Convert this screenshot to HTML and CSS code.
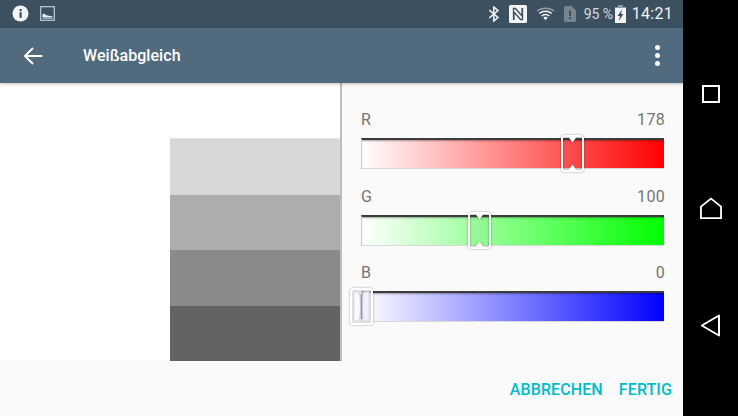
FILE: index.html
```html
<!DOCTYPE html>
<html lang="de">
<head>
<meta charset="utf-8">
<title>Weißabgleich</title>
<link rel="stylesheet" href="styles.css">
</head>
<body>
<div class="screen">
  <div class="main">
    <header class="status">
      <div class="status-left">
        <svg class="ic-info" width="17" height="17" viewBox="0 0 17 17"><circle cx="8.500" cy="8.500" r="8" fill="#f2f4f5"/><rect x="7.500" y="7.200" width="2.200" height="5.600" fill="#3d5060"/><rect x="7.500" y="4" width="2.200" height="2.200" fill="#3d5060"/></svg>
        <svg width="15" height="15" viewBox="0 0 15 15"><rect x="0.700" y="0.700" width="13.600" height="13.600" fill="none" stroke="#c4ccd2" stroke-width="1.200"/><path d="M2.500 11.500V8.500L4.500 7.500L6 9.200L8 9.500L9.500 10L12.500 10.300V11.500Z" fill="#eef1f3"/><rect x="2.500" y="12" width="10" height="1" fill="#9aa7b1"/></svg>
      </div>
      <div class="status-right">
        <svg width="12" height="16" viewBox="0 0 12 16"><path d="M1.300 4.200L10 11.400L5.800 15V1L10 4.600L1.300 11.800" fill="none" stroke="#f2f4f5" stroke-width="1.500"/></svg>
        <svg class="ic-nfc" width="18" height="18" viewBox="0 0 18 18"><rect width="18" height="18" rx="1.500" fill="#f2f4f5"/><path d="M4.500 15V3.500H6.500L13 11V3M13.500 3V14.500H11.500L5 7V15" fill="none" stroke="#3d5060" stroke-width="1.300"/></svg>
        <svg class="ic-wifi" width="19" height="15" viewBox="0 0 20 14"><path d="M1 4.300C5.800 .4 14.200 .4 19 4.300" fill="none" stroke="#8d9ba6" stroke-width="1.600"/><path d="M3.500 7C7.200 4 12.800 4 16.500 7" fill="none" stroke="#f2f4f5" stroke-width="1.600"/><path d="M6 9.500C8.300 7.800 11.700 7.800 14 9.500" fill="none" stroke="#f2f4f5" stroke-width="1.600"/><path d="M7.600 11.200C9 10.200 11 10.200 12.400 11.200L10 14Z" fill="#f2f4f5"/></svg>
        <svg class="ic-sim" width="12" height="16" viewBox="0 0 12 16"><path d="M0 1.500A1.500 1.500 0 0 1 1.500 0H7.500L12 4.500V14.500A1.500 1.500 0 0 1 10.500 16H1.500A1.500 1.500 0 0 1 0 14.500Z" fill="#76858f"/><rect x="5" y="4.500" width="2" height="5.500" fill="#3d5060"/><rect x="5" y="11" width="2" height="2" fill="#3d5060"/></svg>
        <span class="pct">95 %</span>
        <svg class="ic-batt" width="11" height="18" viewBox="0 0 11 18"><rect y="2.500" width="11" height="15.500" fill="#f2f4f5"/><rect x="3" y="0" width="5" height="3" fill="#8d9ba6"/><path d="M7 4.500L2.500 11H5L3.800 16L8.500 9H6Z" fill="#3d5060"/></svg>
        <span class="clock">14:21</span>
      </div>
    </header>
    <div class="appbar">
      <svg class="ic-back" width="20" height="18" viewBox="0 0 20 18"><path d="M19.300 9H2M10 1L2 9L10 17" fill="none" stroke="#fff" stroke-width="2"/></svg>
      <h1 class="title">Weißabgleich</h1>
      <div class="more"><i></i><i></i><i></i></div>
    </div>
    <div class="content">
      <div class="preview">
        <div class="swatches">
          <div class="sw sw1"></div>
          <div class="sw sw2"></div>
          <div class="sw sw3"></div>
          <div class="sw sw4"></div>
        </div>
      </div>
      <div class="panel">
        <div class="row">
          <div class="labels"><span>R</span><span>178</span></div>
          <div class="track track-r">
            <svg class="thumb" style="left:198px" width="25" height="39" viewBox="0 0 25 39"><rect x="2" y="2" width="21" height="35" rx="2.500" fill="rgba(200,0,0,.04)" stroke="#fff" stroke-width="2"/><path d="M8.500 3L12.500 8.500L16.500 3ZM8.500 36L12.500 30.500L16.500 36Z" fill="#fff"/></svg>
          </div>
        </div>
        <div class="row">
          <div class="labels"><span>G</span><span>100</span></div>
          <div class="track track-g">
            <svg class="thumb" style="left:105px" width="25" height="39" viewBox="0 0 25 39"><rect x="2" y="2" width="21" height="35" rx="2.500" fill="rgba(0,120,0,.04)" stroke="#fff" stroke-width="2"/><path d="M8.500 3L12.500 8.500L16.500 3ZM8.500 36L12.500 30.500L16.500 36Z" fill="#fff"/></svg>
          </div>
        </div>
        <div class="row">
          <div class="labels"><span>B</span><span>0</span></div>
          <div class="track track-b">
            <svg class="thumb" style="left:-13px" width="25" height="39" viewBox="0 0 25 39"><rect x="2" y="2" width="21" height="35" rx="2.500" fill="rgba(255,255,255,.55)" stroke="#fff" stroke-width="2"/><path d="M5 5H9.500C12 11 12 28 9.500 34H5Z" fill="#fafafa" stroke="#dcdcdc"/><path d="M20 5H15C13 11 13 28 15 34H20Z" fill="#f1f1fd" stroke="#dcdce8"/><path d="M12.500 7V32" stroke="#9090c8" stroke-width="1.500"/></svg>
          </div>
        </div>
      </div>
    </div>
    <footer class="actions">
      <span class="btn">ABBRECHEN</span>
      <span class="btn">FERTIG</span>
    </footer>
  </div>
  <nav class="navbar">
    <svg class="nav-square" width="18" height="18" viewBox="0 0 18 18"><rect x="1" y="1" width="16" height="16" fill="none" stroke="#fff" stroke-width="2"/></svg>
    <svg width="22" height="23" viewBox="0 0 23 23"><path d="M1 21.500V9.500L11.500 1.200L22 9.500V21.500Z" fill="none" stroke="#fff" stroke-width="1.900"/></svg>
    <svg width="21" height="23" viewBox="0 0 21 23"><path d="M19 1.500V21.500L1.800 11.500Z" fill="none" stroke="#fff" stroke-width="2" stroke-linejoin="round"/></svg>
  </nav>
</div>
</body>
</html>
```

FILE: styles.css
```css
* { box-sizing: border-box; }
html, body { margin: 0; padding: 0; }
body { width: 738px; height: 416px; overflow: hidden; background: #000; font-family: Roboto, "Liberation Sans", sans-serif; }
.screen { display: flex; width: 738px; height: 416px; }
.main { width: 683px; display: flex; flex-direction: column; background: #fafafa; }

.status { height: 28px; background: #3d5060; display: flex; justify-content: space-between; align-items: center; padding: 0 10px 1px 12px; }
.status-left { display: flex; align-items: center; gap: 11px; }
.status-right { display: flex; align-items: center; color: #f2f4f5; }
.ic-nfc { margin-left: 9px; }
.ic-wifi { margin-left: 9px; }
.ic-sim { margin-left: 9px; }
.pct { font-size: 14px; margin-left: 8px; color: #d5dbe0; white-space: nowrap; width: 31px; }
.ic-batt { margin-left: 0; }
.clock { font-size: 16px; margin-left: 6px; letter-spacing: 0.3px; }

.appbar { height: 55px; background: #526a7d; display: flex; align-items: center; padding: 0 23px 0 23px; box-shadow: 0 1px 3px rgba(0,0,0,.25); position: relative; }
.title { margin: -1px 0 0 40px; flex: 1; font-size: 16px; font-weight: 500; color: #fff; letter-spacing: 0.05px; }
.more { display: flex; flex-direction: column; gap: 3px; }
.more i { width: 5px; height: 5px; border-radius: 50%; background: #fff; display: block; }

.content { display: flex; height: 278px; }
.preview { width: 340px; background: #fff; padding: 55px 0 0 170px; }
.swatches { display: flex; flex-direction: column; height: 223px; }
.sw { flex: 1; }
.sw1 { background: #d7d7d7; border-top: 1px solid #e6e6e6; }
.sw2 { background: #adadad; }
.sw3 { background: #8a8a8a; }
.sw4 { background: #636363; }
.panel { flex: 1; border-left: 2px solid #bdbdbd; padding: 26px 18px 0 19px; }
.row { height: 76.500px; }
.labels { display: flex; justify-content: space-between; font-size: 16px; line-height: 19px; color: #757575; height: 29px; padding-top: 1px; letter-spacing: 0.3px; }
.track { position: relative; width: 303px; height: 31px; border-top: 2px solid #3c3c3c; border-bottom: 1px solid #d8d8d8; border-left: 1px solid #c8c8c8; box-shadow: inset 0 2px 2px -1px rgba(0,0,0,.35); }
.track-r { background: linear-gradient(90deg, #fff, #f00); }
.track-g { background: linear-gradient(90deg, #fff, #0f0); }
.track-b { background: linear-gradient(90deg, #fff, #00f); }
.thumb { position: absolute; top: -6px; filter: drop-shadow(0 0 1px rgba(0,0,0,.35)); }

.actions { flex: 1; display: flex; justify-content: flex-end; align-items: flex-start; gap: 16px; padding: 19px 11px 0 0; }
.btn { font-size: 16px; font-weight: 500; color: #00bcc9; line-height: 19px; letter-spacing: 0.1px; }

.navbar { flex: 1; display: flex; flex-direction: column; align-items: center; padding-top: 85px; gap: 94px; background: #000; }
.navbar svg { flex: none; }
```
